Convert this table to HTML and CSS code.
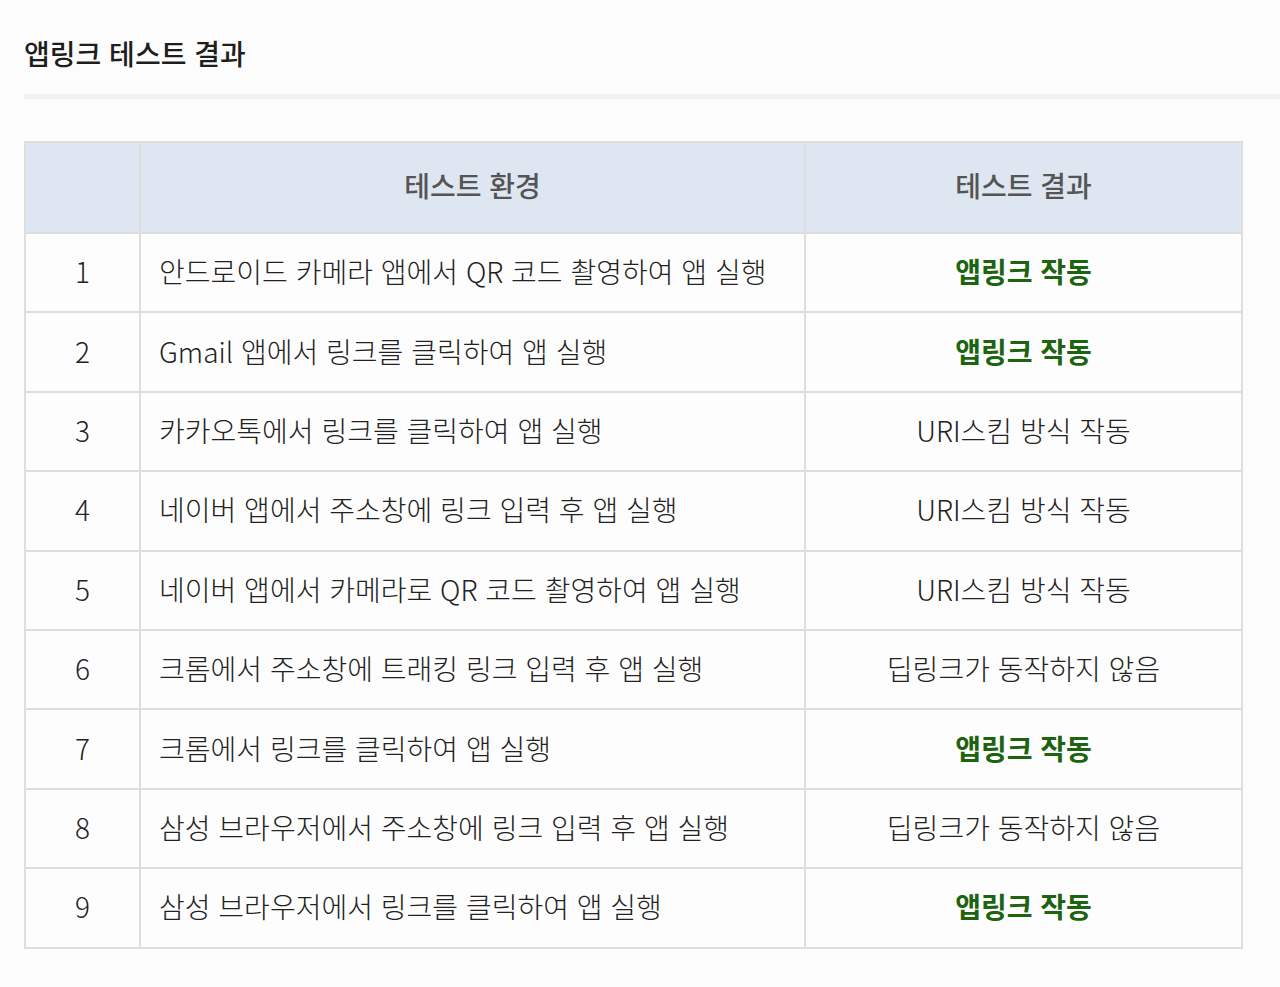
FILE: index.html
```html
<!DOCTYPE html>
<html lang="ko">
<head>
<meta charset="utf-8">
<title>앱링크 테스트 결과</title>
<link rel="stylesheet" href="styles.css">
</head>
<body>
<div class="page">
  <h2 class="title">앱링크 테스트 결과</h2>
  <div class="divider"></div>
  <table class="results">
    <colgroup>
      <col class="c-num">
      <col class="c-env">
      <col class="c-res">
    </colgroup>
    <thead>
      <tr><th></th><th>테스트 환경</th><th>테스트 결과</th></tr>
    </thead>
    <tbody>
      <tr><td class="num">1</td><td class="env">안드로이드 카메라 앱에서 QR 코드 촬영하여 앱 실행</td><td class="res ok">앱링크 작동</td></tr>
      <tr><td class="num">2</td><td class="env">Gmail 앱에서 링크를 클릭하여 앱 실행</td><td class="res ok">앱링크 작동</td></tr>
      <tr><td class="num">3</td><td class="env">카카오톡에서 링크를 클릭하여 앱 실행</td><td class="res">URI스킴 방식 작동</td></tr>
      <tr><td class="num">4</td><td class="env">네이버 앱에서 주소창에 링크 입력 후 앱 실행</td><td class="res">URI스킴 방식 작동</td></tr>
      <tr><td class="num">5</td><td class="env">네이버 앱에서 카메라로 QR 코드 촬영하여 앱 실행</td><td class="res">URI스킴 방식 작동</td></tr>
      <tr><td class="num">6</td><td class="env">크롬에서 주소창에 트래킹 링크 입력 후 앱 실행</td><td class="res">딥링크가 동작하지 않음</td></tr>
      <tr><td class="num">7</td><td class="env">크롬에서 링크를 클릭하여 앱 실행</td><td class="res ok">앱링크 작동</td></tr>
      <tr><td class="num">8</td><td class="env">삼성 브라우저에서 주소창에 링크 입력 후 앱 실행</td><td class="res">딥링크가 동작하지 않음</td></tr>
      <tr><td class="num">9</td><td class="env">삼성 브라우저에서 링크를 클릭하여 앱 실행</td><td class="res ok">앱링크 작동</td></tr>
    </tbody>
  </table>
</div>
</body>
</html>
```
FILE: styles.css
```css
html, body {
  margin: 0;
  padding: 0;
  background: #fcfcfc;
}
body {
  font-family: "Noto Sans CJK KR", "Noto Sans", sans-serif;
  color: #222;
}
.page {
  padding: 33px 0 0 24px;
}
.title {
  margin: 0;
  font-size: 28px;
  line-height: 40px;
  font-weight: 500;
  color: #1e1e1e;
}
.divider {
  margin-top: 21px;
  height: 5px;
  background: #f1f1f1;
}
.results {
  margin-top: 42px;
  width: 1219px;
  border-collapse: collapse;
  table-layout: fixed;
  border: 2px solid #dedede;
}
.c-num { width: 115px; }
.c-env { width: 665px; }
.c-res { width: auto; }
.results th,
.results td {
  border: 2px solid #dedede;
  padding: 0 0 3px 0;
  font-size: 28px;
}
.results th {
  height: 84px;
  padding-bottom: 5px;
  background: #dee7f1;
  color: #555;
  font-weight: 500;
  text-align: center;
}
.results td {
  height: 74.4px;
  background: #fdfdfd;
  font-weight: 300;
  color: #222;
}
.num { text-align: center; }
.results td.env { padding-left: 18px; }
.res { text-align: center; }
.res.ok {
  color: #1d6410;
  font-weight: 700;
}
```
